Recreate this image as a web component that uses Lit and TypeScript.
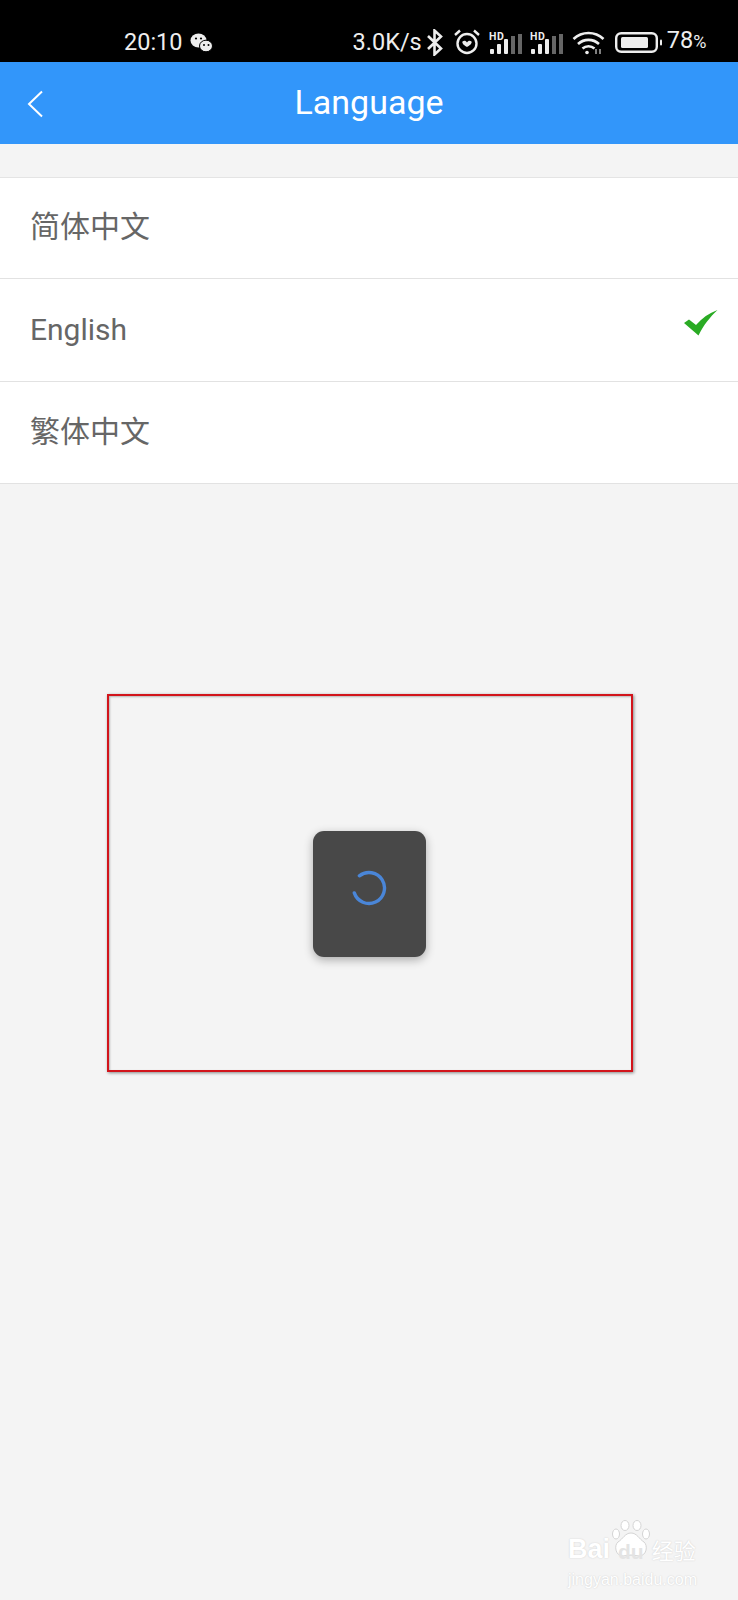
import { LitElement, html, css, svg } from "lit";
import { customElement } from "lit/decorators.js";

const signal = () => svg`
  <text x="0" y="10" class="hd">HD</text>
  <rect x="1" y="19" width="4" height="5" rx="1" fill="#eee"/>
  <rect x="8" y="14" width="4" height="10" rx="1" fill="#eee"/>
  <rect x="15" y="9" width="4" height="15" rx="1" fill="#eee"/>
  <rect x="22" y="6" width="4" height="18" fill="#666"/>
  <rect x="29" y="4" width="4" height="20" fill="#666"/>`;

@customElement("app-root")
export class AppRoot extends LitElement {
  static styles = css`
    :host {
      display: block;
      width: 738px;
      height: 1600px;
      position: relative;
      overflow: hidden;
      background: #f4f4f4;
      font-family: Roboto, "Noto Sans CJK SC", sans-serif;
    }
    .status {
      height: 62px;
      box-sizing: border-box;
      background: #000;
      color: #eee;
      display: flex;
      align-items: flex-end;
      padding: 0 0 1px 124px;
      font-size: 23.500px;
      line-height: 28px;
    }
    .status > * {
      flex: none;
      margin-bottom: 5px;
    }
    .wechat {
      margin-left: 7px;
      margin-bottom: 8px;
    }
    .speed {
      margin-left: 140px;
    }
    .bt {
      margin-left: 4px;
      margin-bottom: 5px;
    }
    .alarm {
      margin-left: 9px;
      margin-bottom: 6px;
    }
    .net {
      margin-left: 8px;
      margin-bottom: 7px;
    }
    .net + .net {
      margin-left: 5px;
    }
    .wifi {
      margin-left: 6px;
      margin-bottom: 6px;
    }
    .battery {
      margin-left: 10px;
      margin-bottom: 8px;
    }
    .pct {
      margin-left: 4px;
    }
    .pct small {
      font-size: 18px;
    }
    .hd {
      font: 700 10.500px Roboto, sans-serif;
      letter-spacing: 0.5px;
      fill: #eee;
    }
    .header {
      height: 82px;
      box-sizing: border-box;
      padding-bottom: 3px;
      background: #3296fa;
      display: flex;
      align-items: center;
      justify-content: center;
      position: relative;
      color: #fff;
      font-size: 34px;
    }
    .back {
      position: absolute;
      left: 27px;
      top: 28px;
    }
    .list {
      margin-top: 33px;
      background: #fff;
      border-top: 1px solid #e4e4e4;
    }
    .row {
      height: 101px;
      border-bottom: 1px solid #e2e2e2;
      display: flex;
      align-items: center;
      justify-content: space-between;
      padding: 0 20px 0 30px;
      font-size: 30px;
      color: #666;
    }
    .row:nth-child(1) {
      height: 100px;
    }
    .row:nth-child(2) {
      height: 102px;
    }
    .row .cjk {
      margin-top: -8px;
    }
    .row .en {
      margin-top: -2px;
    }
    .row svg {
      margin-top: -14px;
    }
    .mark {
      width: 526px;
      height: 378px;
      box-sizing: border-box;
      margin: 210px 0 0 107px;
      padding-top: 22px;
      border: 2.500px solid #d2141b;
      box-shadow: 1px 1px 3px rgba(0, 0, 0, 0.45), inset 1px 1px 2px rgba(0, 0, 0, 0.25);
      display: flex;
      align-items: center;
      justify-content: center;
    }
    .loader {
      width: 113px;
      height: 126px;
      margin-right: 1px;
      border-radius: 11px;
      background: #484848;
      box-shadow: 0 3px 10px rgba(0, 0, 0, 0.3);
      display: flex;
      align-items: center;
      justify-content: center;
    }
    .loader svg {
      margin: 0 1px 12px 0;
    }
    .watermark {
      position: absolute;
      left: 568px;
      top: 1529px;
      color: #fff;
      text-shadow: 0 0 1.500px #c8c8c8;
      line-height: 1;
    }
    .brand {
      display: flex;
      align-items: center;
      height: 40px;
      font: 700 27px "Liberation Sans", sans-serif;
    }
    .brand .du {
      font-size: 21px;
      margin: 6px 8px 0 8px;
      position: relative;
      text-shadow: none;
      color: #e4e4e4;
    }
    .brand .cn {
      font: 400 22px "Noto Sans CJK SC", sans-serif;
    }
    .paw {
      position: absolute;
      left: 42px;
      top: -9px;
    }
    .url {
      font: 400 16px "Liberation Sans", sans-serif;
      margin-top: 2px;
      white-space: nowrap;
    }
  `;

  render() {
    return html`
      <div class="status">
        <span>20:10</span>
        <svg class="wechat" width="23" height="20" viewBox="0 0 23 20">
          <ellipse cx="8.500" cy="7.500" rx="8" ry="7" fill="#eee"/>
          <ellipse cx="16" cy="13" rx="6.500" ry="5.800" fill="#eee" stroke="#000" stroke-width="1"/>
          <circle cx="6" cy="5.500" r="1.100" fill="#000"/>
          <circle cx="11" cy="5.500" r="1.100" fill="#000"/>
          <circle cx="14" cy="12" r="1" fill="#000"/>
          <circle cx="18.500" cy="12" r="1" fill="#000"/>
        </svg>
        <span class="speed">3.0K/s</span>
        <svg class="bt" width="18" height="27" viewBox="0 0 18 27" fill="none" stroke="#eee" stroke-width="2.600">
          <path d="M2 7l13 12.500-6.500 6V1.500L15 7.500 2 20"/>
        </svg>
        <svg class="alarm" width="28" height="26" viewBox="0 0 28 26" fill="none" stroke="#eee">
          <circle cx="14" cy="14.500" r="9.500" stroke-width="2.400"/>
          <path d="M2 6l5-4.500M26 6l-5-4.500" stroke-width="2.400"/>
          <path d="M9.500 12.500c1.500-1.500 3.500-1 4.500 1 1-2 3-2.500 4.500-1 1 2-2.500 4.500-4.500 5.500-2-1-5.500-3.500-4.500-5.500z" fill="#eee" stroke="none"/>
        </svg>
        <svg class="net" width="36" height="24" viewBox="0 0 36 24">${signal()}</svg>
        <svg class="net" width="36" height="24" viewBox="0 0 36 24">${signal()}</svg>
        <svg class="wifi" width="33" height="25" viewBox="0 0 33 25" fill="none" stroke="#eee" stroke-width="2.600">
          <path d="M1.500 9c8.500-8 21.500-8 30 0"/>
          <path d="M6 14c6-5.500 15-5.500 21 0"/>
          <path d="M10.500 18.500c3.500-3 8.500-3 12 0"/>
          <circle cx="15" cy="22.500" r="1.800" fill="#eee" stroke="none"/>
          <path d="M24 19v5M28 19v5" stroke-width="1.500" stroke="#aaa"/>
        </svg>
        <svg class="battery" width="48" height="21" viewBox="0 0 48 21">
          <rect x="1.200" y="1.200" width="40.600" height="18.600" rx="5" fill="none" stroke="#eee" stroke-width="2.400"/>
          <rect x="6" y="5" width="27" height="11" rx="1.500" fill="#eee"/>
          <rect x="45" y="7.500" width="2" height="6" rx="1" fill="#eee"/>
        </svg>
        <span class="pct">78<small>%</small></span>
      </div>
      <div class="header">
        <svg class="back" width="17" height="28" viewBox="0 0 17 28" fill="none" stroke="#fff" stroke-width="2">
          <path d="M15 1.500L2 14l13 12.500"/>
        </svg>
        Language
      </div>
      <div class="list">
        <div class="row"><span class="cjk">简体中文</span></div>
        <div class="row">
          <span class="en">English</span>
          <svg width="34" height="26" viewBox="0 0 34 26">
            <path d="M0 13l5-3.500 7 5.500C18 8 25 3 33.500 0 26 7 19 16 14.500 25.500z" fill="#2aab24"/>
          </svg>
        </div>
        <div class="row"><span class="cjk">繁体中文</span></div>
      </div>
      <div class="mark">
        <div class="loader">
          <svg width="36" height="36" viewBox="0 0 36 36" fill="none">
            <path d="M8.400 5.800A15.500 15.500 0 1 1 3.300 22.900" stroke="#4a86d8" stroke-width="3.400" stroke-linecap="round"/>
          </svg>
        </div>
      </div>
      <div class="watermark">
        <svg class="paw" width="42" height="40" viewBox="0 0 42 40" fill="#fff" stroke="#d4d4d4">
          <ellipse cx="6" cy="14" rx="3.500" ry="5"/>
          <ellipse cx="15" cy="5.500" rx="4" ry="5"/>
          <ellipse cx="27" cy="5.500" rx="4" ry="5"/>
          <ellipse cx="36" cy="14" rx="3.500" ry="5"/>
          <path d="M21 13c6 0 8 6 13 9 4 3 3 14-5 14-3 0-5-1-8-1s-5 1-8 1c-8 0-9-11-5-14 5-3 7-9 13-9z"/>
        </svg>
        <div class="brand"><span>Bai</span><span class="du">du</span><span class="cn">经验</span></div>
        <div class="url">jingyan.baidu.com</div>
      </div>
    `;
  }
}
